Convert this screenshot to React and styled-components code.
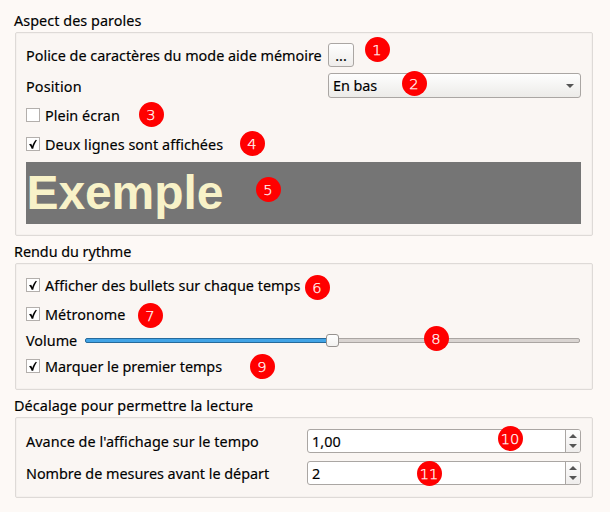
import React from "react";
import styled, { createGlobalStyle } from "styled-components";

const GlobalStyle = createGlobalStyle`
  *, *::before, *::after { box-sizing: border-box; }
  body { margin: 0; background: #fdf9f6; }
`;

const Page = styled.main`
  position: relative;
  width: 610px;
  height: 512px;
  padding: 11px 17px 14px 14px;
  background: #fdf9f6;
  color: #000;
  font: 14.4px/20px "Noto Sans", "Open Sans", sans-serif;
  -webkit-text-stroke: 0.15px currentColor;
  white-space: nowrap;
  overflow: hidden;
`;

const Section = styled.section`
  display: flex;
  flex-direction: column;
  margin-bottom: ${(p) => p.$gap || 0}px;
`;

const Title = styled.h2`
  margin: 0 0 1px;
  height: 20px;
  font: inherit;
  letter-spacing: ${(p) => p.$spacing || 0}px;
`;

const Frame = styled.div`
  display: flex;
  flex-direction: column;
  height: ${(p) => p.$height}px;
  margin-left: 1px;
  padding: ${(p) => p.$top}px 11px 0 10px;
  background: #faf6f3;
  border: 1px solid #dedad7;
  border-radius: 2px;
  box-shadow: inset 0 0 0 1px #f5f1ee;
`;

const Row = styled.div`
  display: flex;
  align-items: center;
  height: ${(p) => p.$height}px;
  margin-bottom: ${(p) => p.$gap || 0}px;
`;

const Label = styled.span`
  width: ${(p) => (p.$width ? p.$width + "px" : "auto")};
  flex: none;
  padding-top: 2px;
  letter-spacing: ${(p) => p.$spacing || 0}px;
`;

const MoreButton = styled.button`
  width: 26px;
  height: 24px;
  padding: 0;
  border: 1px solid #aaa6a3;
  border-radius: 3px;
  background: linear-gradient(#fefefe, #efedeb);
  color: inherit;
  font: inherit;
  line-height: 24px;
`;

const Combo = styled.div`
  display: flex;
  align-items: center;
  justify-content: space-between;
  flex: 1;
  height: 25px;
  padding: 0 6px 0 4px;
  border: 1px solid #aaa6a3;
  border-radius: 3px;
  background: linear-gradient(#fefefe, #ecebe8);
  letter-spacing: -0.08px;
`;

const CheckRow = styled.label`
  display: flex;
  align-items: center;
  gap: 5px;
  height: 20px;
  margin-bottom: ${(p) => p.$gap || 0}px;
`;

const CheckBox = styled.span`
  display: flex;
  flex: none;
  width: 14px;
  height: 14px;
  border: 1px solid #b3afac;
  background: #fff;
`;

const Preview = styled.div`
  height: 62px;
  padding-left: 0.5px;
  background: #757575;
  color: #f8f2c8;
  font: bold 48px/62px "Liberation Sans", Arial, sans-serif;
  letter-spacing: -0.1px;
  -webkit-text-stroke: 0;
`;

const Slider = styled.div`
  display: flex;
  align-items: center;
  flex: 1;
  height: 20px;
  padding-right: 1px;
`;

const Track = styled.div`
  height: 5px;
  width: ${(p) => (p.$filled ? "242px" : "auto")};
  flex: ${(p) => (p.$filled ? "none" : "1")};
  border: 1px solid ${(p) => (p.$filled ? "#266a9b" : "#aaa5a2")};
  border-radius: ${(p) => (p.$filled ? "2px 0 0 2px" : "0 2px 2px 0")};
  background: ${(p) => (p.$filled ? "#41a4e6" : "#d9d4d1")};
`;

const Thumb = styled.div`
  flex: none;
  width: 13px;
  height: 13px;
  margin: 0 -1px;
  z-index: 1;
  border: 1px solid #96928f;
  border-radius: 3px;
  background: linear-gradient(#fff, #f3f2f0);
`;

const SpinBox = styled.div`
  display: flex;
  flex: 1;
  height: 24px;
  border: 1px solid #aaa6a3;
  border-radius: 3px;
  background: #fff;
  overflow: hidden;
`;

const SpinValue = styled.span`
  flex: 1;
  padding-left: 4px;
  line-height: 23px;
  letter-spacing: ${(p) => p.$spacing || 0}px;
`;

const SpinButtons = styled.span`
  display: flex;
  flex-direction: column;
  align-items: center;
  gap: 6px;
  width: 15px;
  padding-top: 4px;
  border-left: 1px solid #aaa6a3;
  background: linear-gradient(#fdfdfd, #efedec);
`;

const ArrowSvg = styled.svg`
  display: block;
  flex: none;
`;

const Badge = styled.span`
  position: absolute;
  left: ${(p) => p.$x}px;
  top: ${(p) => p.$y}px;
  width: 25px;
  height: 25px;
  padding-right: 1px;
  border-radius: 50%;
  background: #f00;
  color: #fff;
  font: 14.7px/25px "DejaVu Sans", sans-serif;
  font-weight: 200;
  -webkit-text-stroke: 0.25px currentColor;
  text-align: center;
  z-index: 2;
`;

const Arrow = ({ up }) => (
  <ArrowSvg width="8" height="4" viewBox="0 0 8 4">
    <path d={up ? "M0 4L4 0L8 4Z" : "M0 0H8L4 4Z"} fill="#555" />
  </ArrowSvg>
);

const Check = ({ checked, gap, spacing, children }) => (
  <CheckRow $gap={gap}>
    <CheckBox>
      {checked && (
        <svg width="12" height="12" viewBox="0 0 12 12">
          <path d="M2 6.3L4.2 5.7L5.3 8C6.2 5.4 7.3 3.4 8.9 1.8L9.9 2.2C8.1 4.7 7 7.3 6.2 10.7H4.6C4 8.9 3.2 7.5 2 6.3Z" fill="#050505" />
        </svg>
      )}
    </CheckBox>
    <Label $spacing={spacing}>{children}</Label>
  </CheckRow>
);

const Spin = ({ value, spacing }) => (
  <SpinBox>
    <SpinValue $spacing={spacing}>{value}</SpinValue>
    <SpinButtons>
      <Arrow up />
      <Arrow />
    </SpinButtons>
  </SpinBox>
);

const badges = [
  [365, 37], [402, 71], [139, 102], [240, 131], [256, 177], [305, 275],
  [138, 303], [424, 326], [250, 354], [498, 426], [417, 461],
];

export default function App() {
  return (
    <Page>
      <GlobalStyle />
      <Section $gap={6}>
        <Title $spacing={0.05}>Aspect des paroles</Title>
        <Frame $height={204} $top={10}>
          <Row $height={24} $gap={6}>
            <Label $width={302}>Police de caractères du mode aide mémoire</Label>
            <MoreButton>...</MoreButton>
          </Row>
          <Row $height={25} $gap={7}>
            <Label $width={302} $spacing={0.15}>Position</Label>
            <Combo>
              <span>En bas</span>
              <Arrow />
            </Combo>
          </Row>
          <Check gap={9} spacing={0.03}>Plein écran</Check>
          <Check checked gap={8} spacing={0.05}>Deux lignes sont affichées</Check>
          <Preview>Exemple</Preview>
        </Frame>
      </Section>
      <Section $gap={6}>
        <Title $spacing={-0.04}>Rendu du rythme</Title>
        <Frame $height={127} $top={11}>
          <Check checked gap={9} spacing={0.02}>Afficher des bullets sur chaque temps</Check>
          <Check checked gap={6} spacing={0.06}>Métronome</Check>
          <Row $height={20} $gap={6}>
            <Label $width={59}>Volume</Label>
            <Slider>
              <Track $filled />
              <Thumb />
              <Track />
            </Slider>
          </Row>
          <Check checked spacing={-0.04}>Marquer le premier temps</Check>
        </Frame>
      </Section>
      <Section>
        <Title $spacing={0.075}>Décalage pour permettre la lecture</Title>
        <Frame $height={81} $top={11}>
          <Row $height={24} $gap={8}>
            <Label $width={281} $spacing={0.055}>Avance de l'affichage sur le tempo</Label>
            <Spin value="1,00" spacing={0.1} />
          </Row>
          <Row $height={24}>
            <Label $width={281} $spacing={-0.02}>Nombre de mesures avant le départ</Label>
            <Spin value="2" />
          </Row>
        </Frame>
      </Section>
      {badges.map(([x, y], i) => (
        <Badge key={i} $x={x} $y={y}>{i + 1}</Badge>
      ))}
    </Page>
  );
}
